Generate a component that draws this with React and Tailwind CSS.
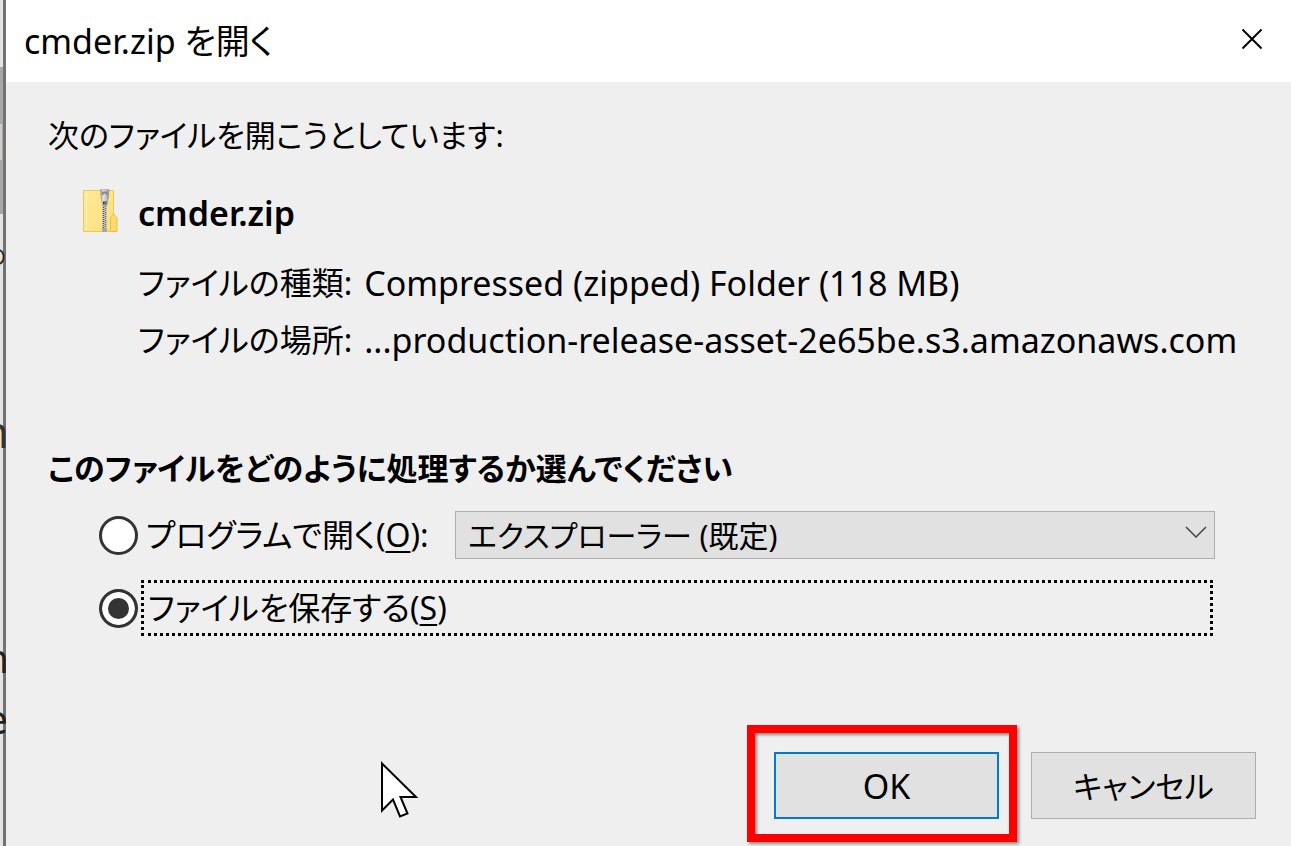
import React, { useState } from 'react';
import { clsx } from 'clsx';

const APPS = ['エクスプローラー (既定)'];

// slice of the window behind the dialog
function BackgroundEdge() {
  return (
    <div
      aria-hidden="true"
      className="relative w-[6px] shrink-0 overflow-hidden border-r-3 border-[#727272] bg-[#e4e4e4]"
    >
      <div className="absolute top-[67px] left-0 h-[147px] w-[3px] bg-[#a8a8a8]" />
      <div className="absolute top-[124px] left-0 h-9 w-[2px] bg-[#d2cdc6]" />
      <div className="absolute top-0 left-[3px] h-[214px] w-[3px] bg-[#5c5c5c]" />
    </div>
  );
}

function PageText() {
  return (
    <div
      aria-hidden="true"
      className="pointer-events-none absolute top-0 left-0 h-full w-[6px] overflow-hidden text-[40px] leading-[48px] text-[#222]"
    >
      <span className="absolute top-[231px] right-0 text-[22px]">の</span>
      <span className="absolute top-[407px] -right-[3px] text-[44px] text-[#333]">n</span>
      <span className="absolute top-[634px] -right-[3px]">n</span>
      <span className="absolute top-[695px] -right-[2px]">e</span>
    </div>
  );
}

function ZipIcon() {
  return (
    <svg viewBox="0 0 35 44" className="h-11 w-[35px] shrink-0" aria-hidden="true">
      <defs>
        <linearGradient id="folder" x1="0" y1="0" x2="1" y2="1">
          <stop offset="0" stopColor="#ffe994" />
          <stop offset="1" stopColor="#fddf82" />
        </linearGradient>
        <linearGradient id="metal" x1="0" y1="0" x2="1" y2="0">
          <stop offset="0" stopColor="#8d8d8d" />
          <stop offset="0.3" stopColor="#e6e6e6" />
          <stop offset="0.7" stopColor="#bdbdbd" />
          <stop offset="1" stopColor="#858585" />
        </linearGradient>
      </defs>
      <path d="M.5 1.500h30V42.500H.5z" fill="url(#folder)" stroke="#ecca4c" />
      <path d="M3.500 4v36" stroke="#fff3c4" />
      <path d="M27.500 42.500V29l3-4.500 3.500 4.500V42.500z" fill="#fcda70" stroke="#e9c140" />
      <path d="M19 16h5v26h-5z" fill="#d9d3bd" />
      <path d="M20.500 16v23" stroke="#4d4d4d" strokeWidth="1.500" strokeDasharray="1 1" />
      <path d="M22.500 17v22" stroke="#5f5f5f" strokeWidth="1.500" strokeDasharray="1 1" />
      <path d="M19 39h5v4h-5z" fill="#a7a7a7" />
      <path d="M17.500 0.500h8.500l-.5 8-1.500 8h-4.500l-1.500-8z" fill="url(#metal)" stroke="#999" strokeWidth=".5" />
      <path d="M19.500 2.500h4.500l1 3.500h-2v-1.500h-2.500V6h-2z" fill="#858585" />
      <path d="M20 12.500h3.500v3H20z" fill="#333" />
      <path d="M21 14h2" stroke="#aaa" />
    </svg>
  );
}

function Cursor() {
  return (
    <svg
      viewBox="0 0 40 58"
      className="pointer-events-none absolute top-[761px] left-[380px] h-[58px] w-10"
      aria-hidden="true"
    >
      <path
        d="M2 2.500V49.500L13 38.500 20 55.500 27.500 52.500 20.500 36H36z"
        fill="#fff"
        stroke="#000"
        strokeWidth="2"
      />
    </svg>
  );
}

function Radio({ id, checked, onChange }) {
  return (
    <input
      id={id}
      type="radio"
      name="action"
      checked={checked}
      onChange={onChange}
      className={clsx(
        'size-[39px] shrink-0 appearance-none rounded-full border-3 border-[#333] outline-none',
        checked ? 'bg-[#333] shadow-[inset_0_0_0_6px_white]' : 'bg-white'
      )}
    />
  );
}

export default function App() {
  const [action, setAction] = useState('save');

  return (
    <div className="relative flex min-h-screen bg-[#efefef] font-['Noto_Sans','Noto_Sans_CJK_JP',sans-serif] text-[32px] leading-[48px] text-black [font-feature-settings:'palt']">
      <BackgroundEdge />

      <div role="dialog" aria-labelledby="title" className="flex min-w-0 flex-1 flex-col">
        <header className="flex h-[82px] items-center justify-between bg-white pr-7 pl-[18px]">
          <h1 id="title" className="text-[34px]">cmder.zip を開く</h1>
          <button type="button" aria-label="閉じる" className="pb-1">
            <svg viewBox="0 0 22 22" className="size-[22px]" aria-hidden="true">
              <path d="M1.500 1.500l19 19M20.500 1.500l-19 19" stroke="#000" strokeWidth="2" />
            </svg>
          </button>
        </header>

        <main className="flex flex-1 flex-col pt-[29px] pr-[35px] pb-[27px] pl-[42px]">
          <p className="text-[31px]">次のファイルを開こうとしています:</p>

          <section className="mt-[30px] flex gap-5 pl-[35px]">
            <ZipIcon />
            <div>
              <p className="text-[34px] font-semibold">cmder.zip</p>
              <dl className="mt-[22px] grid grid-cols-[auto_1fr] gap-x-3 gap-y-[9px] whitespace-nowrap">
                <dt>ファイルの種類:</dt>
                <dd className="text-[34px]">Compressed (zipped) Folder (118 MB)</dd>
                <dt>ファイルの場所:</dt>
                <dd className="text-[34px]">...production-release-asset-2e65be.s3.amazonaws.com</dd>
              </dl>
            </div>
          </section>

          <h2 className="mt-20 text-[31px] font-bold">このファイルをどのように処理するか選んでください</h2>

          <div className="mt-[19px] mr-[41px] flex items-center pl-[51px]">
            <Radio id="open" checked={action === 'open'} onChange={() => setAction('open')} />
            <label htmlFor="open" className="w-[317px] shrink-0 pl-2">
              プログラムで開く(<u className="decoration-2 underline-offset-4">O</u>):
            </label>
            <div className="relative flex-1">
              <select
                aria-label="プログラム"
                className="block h-12 w-full appearance-none border border-[#adadad] bg-[#e1e1e1] pl-3 text-[30px] outline-none"
              >
                {APPS.map((app) => (
                  <option key={app}>{app}</option>
                ))}
              </select>
              <svg
                viewBox="0 0 22 12"
                className="pointer-events-none absolute top-[15px] right-2 h-3 w-[22px]"
                aria-hidden="true"
              >
                <path d="M1 1l10 10L21 1" fill="none" stroke="#444" strokeWidth="1.500" />
              </svg>
            </div>
          </div>

          <div className="mt-[21px] mr-[43px] flex items-center pl-[51px]">
            <Radio id="save" checked={action === 'save'} onChange={() => setAction('save')} />
            <label htmlFor="save" className="ml-[3px] flex-1 border-3 border-dotted border-black py-px pl-1">
              ファイルを保存する(<u className="decoration-2 underline-offset-4">S</u>)
            </label>
          </div>

          <footer className="mt-auto flex justify-end gap-8 pt-10">
            <div className="relative">
              <button type="button" className="h-[67px] w-[225px] border-2 border-[#0078d7] bg-[#e1e1e1] text-[34px]">
                OK
              </button>
              <div className="pointer-events-none absolute -top-[27px] -right-[18px] -bottom-[23px] -left-[27px] border-8 border-[#ff0000] shadow-[2px_2px_3px_#888,inset_2px_2px_3px_#888]" />
            </div>
            <button type="button" className="h-[67px] w-[225px] border border-[#adadad] bg-[#e1e1e1] text-[31px]">
              キャンセル
            </button>
          </footer>
        </main>
      </div>

      <PageText />
      <Cursor />
    </div>
  );
}
